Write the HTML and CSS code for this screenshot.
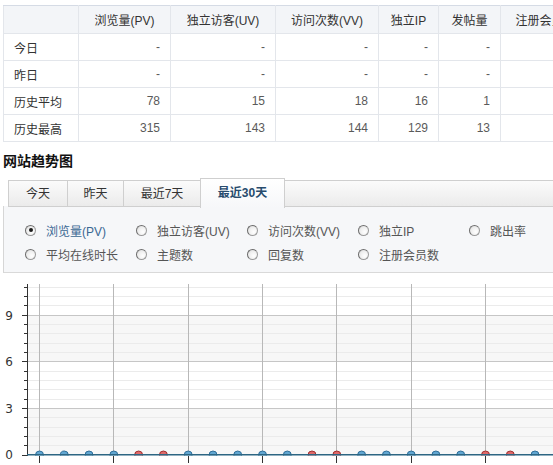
FILE: index.html
```html
<!DOCTYPE html>
<html lang="zh-CN">
<head>
<meta charset="utf-8">
<title>网站统计</title>
<link rel="stylesheet" href="styles.css">
</head>
<body>
<div class="page">
  <table class="stats">
    <colgroup>
      <col class="c-label"><col class="c-pv"><col class="c-uv"><col class="c-vv"><col class="c-ip"><col class="c-post"><col class="c-reg">
    </colgroup>
    <thead>
      <tr><th></th><th>浏览量(PV)</th><th>独立访客(UV)</th><th>访问次数(VV)</th><th>独立IP</th><th>发帖量</th><th>注册会员数</th></tr>
    </thead>
    <tbody>
      <tr><td class="lbl">今日</td><td>-</td><td>-</td><td>-</td><td>-</td><td>-</td><td></td></tr>
      <tr><td class="lbl">昨日</td><td>-</td><td>-</td><td>-</td><td>-</td><td>-</td><td></td></tr>
      <tr><td class="lbl">历史平均</td><td>78</td><td>15</td><td>18</td><td>16</td><td>1</td><td></td></tr>
      <tr><td class="lbl">历史最高</td><td>315</td><td>143</td><td>144</td><td>129</td><td>13</td><td></td></tr>
    </tbody>
  </table>

  <h2 class="title">网站趋势图</h2>

  <div class="trend">
    <div class="tabs">
      <span class="tab t1">今天</span>
      <span class="tab t2">昨天</span>
      <span class="tab t3">最近7天</span>
      <span class="tab t4 active">最近30天</span>
      <span class="tab-fill"></span>
    </div>
    <div class="panel">
      <div class="options">
        <label class="opt checked"><span class="radio"></span>浏览量(PV)</label>
        <label class="opt"><span class="radio"></span>独立访客(UV)</label>
        <label class="opt"><span class="radio"></span>访问次数(VV)</label>
        <label class="opt"><span class="radio"></span>独立IP</label>
        <label class="opt"><span class="radio"></span>跳出率</label>
        <label class="opt"><span class="radio"></span>平均在线时长</label>
        <label class="opt"><span class="radio"></span>主题数</label>
        <label class="opt"><span class="radio"></span>回复数</label>
        <label class="opt"><span class="radio"></span>注册会员数</label>
      </div>
    </div>
    <div class="chart">
      <svg width="553" height="192" viewBox="0 0 553 192" xmlns="http://www.w3.org/2000/svg">
        <defs>
          <clipPath id="plot"><rect x="24" y="0" width="540" height="182.5"/></clipPath>
        </defs>
        <rect x="25" y="135.33" width="528" height="46.67" fill="#f7f7f7"/>
        <rect x="25" y="42" width="528" height="46.67" fill="#f7f7f7"/>
        <g stroke="#ebebeb" stroke-width="1">
          <line x1="25" x2="553" y1="172.5" y2="172.5"/>
          <line x1="25" x2="553" y1="163.5" y2="163.5"/>
          <line x1="25" x2="553" y1="154.5" y2="154.5"/>
          <line x1="25" x2="553" y1="144.5" y2="144.5"/>
          <line x1="25" x2="553" y1="126.5" y2="126.5"/>
          <line x1="25" x2="553" y1="116.5" y2="116.5"/>
          <line x1="25" x2="553" y1="107.5" y2="107.5"/>
          <line x1="25" x2="553" y1="98.5" y2="98.5"/>
          <line x1="25" x2="553" y1="79.5" y2="79.5"/>
          <line x1="25" x2="553" y1="70.5" y2="70.5"/>
          <line x1="25" x2="553" y1="60.5" y2="60.5"/>
          <line x1="25" x2="553" y1="51.5" y2="51.5"/>
          <line x1="25" x2="553" y1="32.5" y2="32.5"/>
          <line x1="25" x2="553" y1="23.5" y2="23.5"/>
          <line x1="25" x2="553" y1="14.5" y2="14.5"/>
        </g>
        <g stroke="#c6c6c6" stroke-width="1">
          <line x1="25" x2="553" y1="135.5" y2="135.5"/>
          <line x1="25" x2="553" y1="88.5" y2="88.5"/>
          <line x1="25" x2="553" y1="42.5" y2="42.5"/>
        </g>
        <g stroke="#b8b8b8" stroke-width="1">
          <line x1="36.5" x2="36.5" y1="11" y2="182"/>
          <line x1="110.5" x2="110.5" y1="11" y2="182"/>
          <line x1="185.5" x2="185.5" y1="11" y2="182"/>
          <line x1="259.5" x2="259.5" y1="11" y2="182"/>
          <line x1="333.5" x2="333.5" y1="11" y2="182"/>
          <line x1="408.5" x2="408.5" y1="11" y2="182"/>
          <line x1="482.5" x2="482.5" y1="11" y2="182"/>
        </g>
        <g stroke="#333" stroke-width="1">
          <line x1="24.5" x2="24.5" y1="11" y2="183"/>
          <line x1="21" x2="24" y1="172.5" y2="172.5"/>
          <line x1="21" x2="24" y1="163.5" y2="163.5"/>
          <line x1="21" x2="24" y1="154.5" y2="154.5"/>
          <line x1="21" x2="24" y1="144.5" y2="144.5"/>
          <line x1="19" x2="24" y1="135.5" y2="135.5"/>
          <line x1="21" x2="24" y1="126.5" y2="126.5"/>
          <line x1="21" x2="24" y1="116.5" y2="116.5"/>
          <line x1="21" x2="24" y1="107.5" y2="107.5"/>
          <line x1="21" x2="24" y1="98.5" y2="98.5"/>
          <line x1="19" x2="24" y1="88.5" y2="88.5"/>
          <line x1="21" x2="24" y1="79.5" y2="79.5"/>
          <line x1="21" x2="24" y1="70.5" y2="70.5"/>
          <line x1="21" x2="24" y1="60.5" y2="60.5"/>
          <line x1="21" x2="24" y1="51.5" y2="51.5"/>
          <line x1="19" x2="24" y1="42.5" y2="42.5"/>
          <line x1="21" x2="24" y1="32.5" y2="32.5"/>
          <line x1="21" x2="24" y1="23.5" y2="23.5"/>
          <line x1="21" x2="24" y1="14.5" y2="14.5"/>
          <line x1="19" x2="24" y1="182.5" y2="182.5"/>
        </g>
        <g class="ylabels" font-size="12" fill="#333" text-anchor="end">
          <text x="10" y="186">0</text>
          <text x="10" y="140">3</text>
          <text x="10" y="93">6</text>
          <text x="10" y="47">9</text>
        </g>
        <g stroke="#333" stroke-width="1">
          <line x1="36.5" x2="36.5" y1="183" y2="190"/>
          <line x1="110.5" x2="110.5" y1="183" y2="190"/>
          <line x1="185.5" x2="185.5" y1="183" y2="190"/>
          <line x1="259.5" x2="259.5" y1="183" y2="190"/>
          <line x1="333.5" x2="333.5" y1="183" y2="190"/>
          <line x1="408.5" x2="408.5" y1="183" y2="190"/>
          <line x1="482.5" x2="482.5" y1="183" y2="190"/>
        </g>
        <g clip-path="url(#plot)" stroke-width="1">
          <g fill="#62a7d2" stroke="#2f6e98">
            <circle cx="36.5" cy="182" r="4"/>
            <circle cx="61.3" cy="182" r="4"/>
            <circle cx="86" cy="182" r="4"/>
            <circle cx="110.8" cy="182" r="4"/>
            <circle cx="185.2" cy="182" r="4"/>
            <circle cx="210" cy="182" r="4"/>
            <circle cx="234.7" cy="182" r="4"/>
            <circle cx="259.5" cy="182" r="4"/>
            <circle cx="284.3" cy="182" r="4"/>
            <circle cx="358.6" cy="182" r="4"/>
            <circle cx="383.4" cy="182" r="4"/>
            <circle cx="408.2" cy="182" r="4"/>
            <circle cx="432.9" cy="182" r="4"/>
            <circle cx="457.7" cy="182" r="4"/>
            <circle cx="532" cy="182" r="4"/>
          </g>
          <g fill="#e06a6a" stroke="#9e3030">
            <circle cx="135.6" cy="182" r="4"/>
            <circle cx="160.4" cy="182" r="4"/>
            <circle cx="309" cy="182" r="4"/>
            <circle cx="333.8" cy="182" r="4"/>
            <circle cx="482.5" cy="182" r="4"/>
            <circle cx="507.3" cy="182" r="4"/>
          </g>
          <line x1="24" x2="553" y1="182" y2="182" stroke="#2d6683" stroke-width="2"/>
        </g>
      </svg>
    </div>
  </div>
</div>
</body>
</html>
```

FILE: styles.css
```css
html, body {
  margin: 0;
  padding: 0;
  background: #ffffff;
  overflow: hidden;
}

body {
  width: 553px;
  height: 465px;
  font-family: "Liberation Sans", "Noto Sans CJK SC", sans-serif;
  font-size: 12px;
  color: #333333;
}

.page {
  width: 553px;
  overflow: hidden;
}

/* ---------- stats table ---------- */
.stats {
  margin: 5px 0 0 3px;
  border-collapse: collapse;
  table-layout: fixed;
  width: 587px;
}

.c-label { width: 75px; }
.c-pv { width: 92px; }
.c-uv { width: 105px; }
.c-vv { width: 103px; }
.c-ip { width: 60px; }
.c-post { width: 62px; }
.c-reg { width: 90px; }

.stats th,
.stats td {
  border: 1px solid #e3e6eb;
  padding: 0 10px;
  white-space: nowrap;
  font-weight: normal;
}

.stats thead tr {
  height: 28px;
}

.stats th {
  background: #f3f5f8;
  text-align: center;
  color: #333333;
  border-top-color: #d5dbe5;
}

.stats tbody tr {
  height: 27px;
}

.stats td {
  text-align: right;
  color: #5a5a5a;
}

.stats td.lbl {
  text-align: left;
  color: #333333;
}

/* ---------- title ---------- */
.title {
  margin: 9px 0 0 3px;
  font-size: 14px;
  line-height: 20px;
  font-weight: bold;
  color: #111111;
}

/* ---------- trend block ---------- */
.trend {
  margin: 7px 0 0 3px;
}

.tabs {
  display: flex;
  align-items: flex-end;
  height: 29px;
  padding-left: 5px;
  position: relative;
  z-index: 1;
}

.tab {
  box-sizing: border-box;
  height: 27px;
  line-height: 26px;
  text-align: center;
  color: #333333;
  border-top: 1px solid #cfcfcf;
  border-left: 1px solid #cfcfcf;
  border-bottom: 1px solid #cfcfcf;
  background: linear-gradient(#fbfbfb, #ebebeb);
}

.t1 { width: 59px; }
.t2 { width: 56px; }
.t3 { width: 77px; }
.t4 { width: 85px; }

.tab.active {
  height: 30px;
  line-height: 28px;
  margin-bottom: -1px;
  border-right: 1px solid #cfcfcf;
  border-bottom: none;
  font-weight: bold;
  color: #274b6d;
  background: linear-gradient(#ffffff, #f6f7f9);
}

.tab-fill {
  flex: 1;
  box-sizing: border-box;
  height: 27px;
  border-top: 1px solid #cfcfcf;
  border-bottom: 1px solid #cfcfcf;
  background: linear-gradient(#fbfbfb, #ebebeb);
}

.panel {
  box-sizing: border-box;
  height: 67px;
  margin-top: -1px;
  background: #f6f7f9;
  border-left: 1px solid #d6d6d6;
  border-bottom: 1px solid #d9d9d9;
  padding: 12px 0 0 21px;
}

.options {
  display: grid;
  grid-template-columns: repeat(5, 111px);
  grid-auto-rows: 24px;
}

.opt {
  display: flex;
  align-items: center;
  gap: 10px;
  color: #555555;
  white-space: nowrap;
}

.opt.checked {
  color: #3a6893;
}

.radio {
  box-sizing: border-box;
  position: relative;
  width: 11px;
  height: 11px;
  border-radius: 50%;
  border: 1px solid #9a9a9a;
  border-top-color: #6e6e6e;
  border-left-color: #6e6e6e;
  background: radial-gradient(circle at 65% 65%, #ffffff 0%, #f0f0f0 50%, #d6d6d6 100%);
  flex: none;
}

.opt.checked .radio::after {
  content: "";
  position: absolute;
  left: 2.5px;
  top: 2.5px;
  width: 4px;
  height: 4px;
  border-radius: 50%;
  background: #1a1a1a;
}

.chart {
  height: 192px;
}

.chart svg {
  display: block;
}

.ylabels {
  font-family: "DejaVu Sans", "Liberation Sans", sans-serif;
}
```
